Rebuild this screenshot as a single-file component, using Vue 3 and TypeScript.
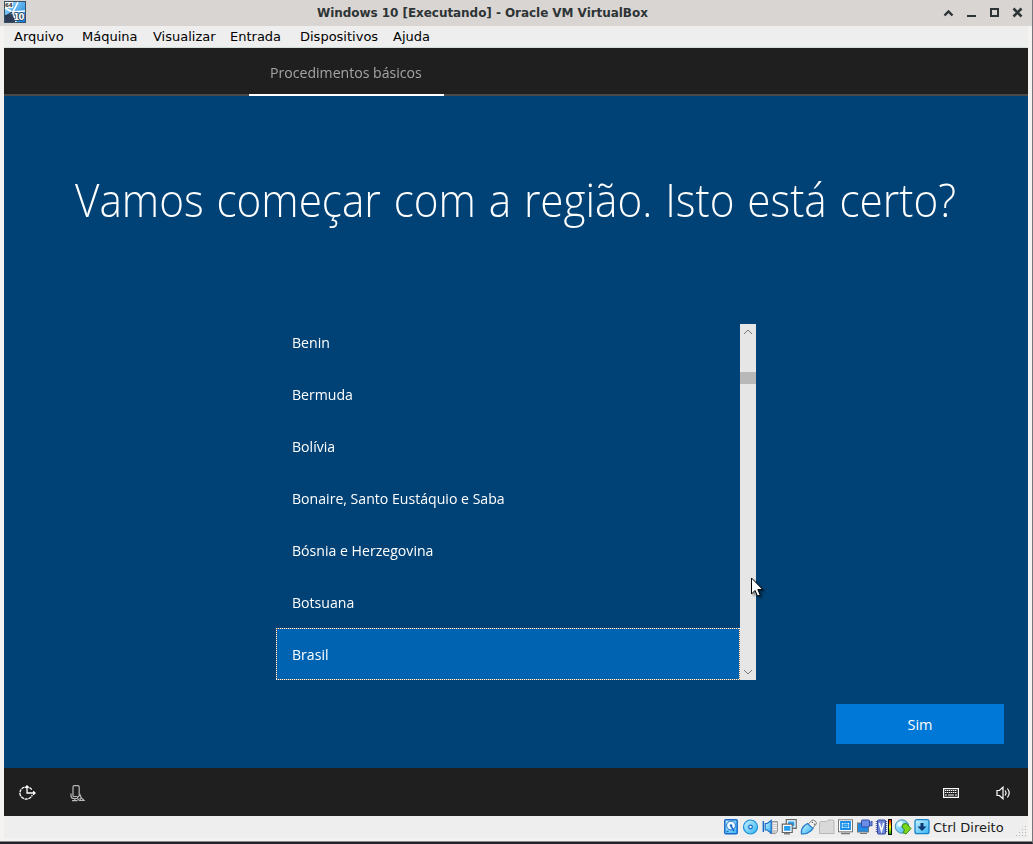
<script setup lang="ts">
const menus: string[] = ['Arquivo', 'Máquina', 'Visualizar', 'Entrada', 'Dispositivos', 'Ajuda']

interface Region {
  name: string
  selected?: boolean
}

const regions: Region[] = [
  { name: 'Benin' },
  { name: 'Bermuda' },
  { name: 'Bolívia' },
  { name: 'Bonaire, Santo Eustáquio e Saba' },
  { name: 'Bósnia e Herzegovina' },
  { name: 'Botsuana' },
  { name: 'Brasil', selected: true },
]
</script>

<template>
  <div class="window">
    <header class="titlebar">
      <svg class="app-icon" width="22" height="22" viewBox="0 0 22 22">
        <defs>
          <linearGradient id="pane" x1="0" y1="0" x2="1" y2="1">
            <stop offset="0" stop-color="#9bdcff" />
            <stop offset="1" stop-color="#1681dc" />
          </linearGradient>
        </defs>
        <rect width="22" height="22" fill="#35516a" />
        <rect x="1" y="1" width="20" height="20" fill="url(#pane)" />
        <path d="M1 14l7-1 4 8H1z" fill="#303b55" />
        <path d="M1 7l7 4 13-1M14 1l-5 10 3 10" stroke="#fff" stroke-width="1.6" fill="none" />
        <path d="M1 16l7-5" stroke="#263950" stroke-width="1.4" />
        <rect x="1" y="1" width="8" height="6" fill="#f7f7f7" />
        <text x="1" y="6" font-size="5.5" font-weight="700" fill="#333">64</text>
        <text x="9.4" y="19" font-size="8.5" font-weight="700" fill="#fff" stroke="#203852" stroke-width="1.3" paint-order="stroke" textLength="11">10</text>
      </svg>
      <span class="title">Windows 10 [Executando] - Oracle VM VirtualBox</span>
      <svg class="controls" width="82" height="14" viewBox="0 0 82 14" fill="none" stroke="#2d3436">
        <path d="M1.5 9.5L5.5 5.5l4 4" stroke-width="2.4" />
        <path d="M24 10h9" stroke-width="2" />
        <rect x="48" y="3" width="7" height="7" stroke-width="2" />
        <path d="M70.5 2.5l8 8m0-8l-8 8" stroke-width="2.5" />
      </svg>
    </header>

    <main class="frame">
      <nav class="menubar">
        <span v-for="menu in menus" :key="menu">{{ menu }}</span>
      </nav>

      <section class="guest">
        <div class="tabs">
          <div class="tab"><span class="label">Procedimentos básicos</span></div>
        </div>

        <div class="setup">
          <h1>Vamos começar com a região. Isto está certo?</h1>
          <div class="picker">
            <ul class="regions">
              <li v-for="region in regions" :key="region.name" :class="{ selected: region.selected }">
                <svg v-if="region.selected" class="focus" width="464" height="52" fill="none">
                  <path d="M0 .5H464M463.5 0V52M0 51.5H464M.5 0V52" stroke="#7d6b58" />
                  <path d="M0 .5H464M463.5 0V52M0 51.5H464M.5 0V52" stroke="#fff" stroke-dasharray="1 1" shape-rendering="crispEdges" />
                </svg>
                <span class="label">{{ region.name }}</span>
              </li>
            </ul>
            <div class="scrollbar">
              <svg width="16" height="16" viewBox="0 0 16 16"><path d="M4 10l4-4 4 4" fill="none" stroke="#777" /></svg>
              <div class="thumb"></div>
              <svg class="down" width="16" height="16" viewBox="0 0 16 16"><path d="M4 6l4 4 4-4" fill="none" stroke="#777" /></svg>
            </div>
          </div>
          <div class="actions"><button>Sim</button></div>
        </div>

        <footer class="toolbar">
          <svg class="ease" width="18" height="16" viewBox="0 0 18 16" fill="none" stroke="#fff" stroke-width="1.3">
            <path d="M5.5 2.2A6 6 0 0 0 7.5 14A6 6 0 0 0 13.2 10" stroke-dasharray="3.2 .7" />
            <path d="M8 1v7h8M6.2 2.8L8 1l1.8 1.8M14.2 6.2L16 8l-1.8 1.8M10.5 2.6A6 6 0 0 1 12.8 4.6" />
          </svg>
          <svg class="mic" width="15" height="17" viewBox="0 0 15 17" fill="none" stroke="#b9b9b9" stroke-width="1.2">
            <path d="M3 11.5V2q0-1.4 1.4-1.4h3.4q1.4 0 1.4 1.4v8M3 11.5h4.2M1 8.5v2.5q0 2.5 3 2.5h3M4.8 13.5v2.2M2 15.7h5.5" />
            <path d="M10 9.8l1.2 3 3 2.7H9.6q-2.2-.8-2-3.2zM10.2 13v2.3" />
          </svg>
          <svg class="keyboard" width="16" height="10" viewBox="0 0 16 10" fill="none" stroke="#fff">
            <rect x=".6" y=".6" width="14.8" height="8.8" stroke-width="1.2" />
            <path d="M2 2.5h12M2 4.5h12" stroke-dasharray="1.4 .6" />
            <path d="M2 7h2m1 0h6m1 0h2" />
          </svg>
          <svg class="volume" width="15" height="14" viewBox="0 0 15 14" fill="none" stroke="#fff" stroke-width="1.2">
            <path d="M1 4.5h2.4L7 1.2v11.6L3.4 9.5H1z" />
            <path d="M9 4.5q2 2.5 0 5M11.4 2.5q3.6 4.5 0 9" />
          </svg>
        </footer>
      </section>

      <div class="statusbar">
        <svg class="devices" width="207" height="16" viewBox="0 0 207 16">
          <defs>
            <linearGradient id="sky" x1="0" y1="0" x2="1" y2="1">
              <stop offset="0" stop-color="#c7f2ff" />
              <stop offset="1" stop-color="#36b3f4" />
            </linearGradient>
            <linearGradient id="load" x1="0" y1="0" x2="0" y2="1">
              <stop offset="0" stop-color="#f00" />
              <stop offset=".5" stop-color="#ff0" />
              <stop offset="1" stop-color="#090" />
            </linearGradient>
          </defs>
          <!-- hard disk -->
          <g>
            <rect x=".8" y=".8" width="12.4" height="14" rx="1" fill="url(#sky)" stroke="#1769ca" stroke-width="1.5" />
            <circle cx="7" cy="6.5" r="4.4" fill="#f2fcff" stroke="#2372cd" />
            <circle cx="7" cy="6.5" r="1.3" fill="#1c6cce" />
            <path d="M7 7l3 5M2.5 12.5h2" stroke="#1c6cce" stroke-width="1.5" />
          </g>
          <!-- optical disc -->
          <circle cx="26.5" cy="8" r="7" fill="url(#sky)" stroke="#188fdc" stroke-width="1.2" />
          <circle cx="26.5" cy="8" r="1.8" fill="#fff" stroke="#166fc8" stroke-width="1.3" />
          <!-- audio -->
          <g>
            <path d="M48 2.5h5.5v10l-2 2H46z" fill="#c8c8c8" stroke="#999" />
            <path d="M49 4.5h4m-4 2h4m-4 2h4m-4 2h4" stroke="#f4f4f4" />
            <path d="M39.3 2v11" stroke="#176cc9" stroke-width="1.4" />
            <path d="M41.2 4.5h2l4-3v12.5l-4-3h-2z" fill="url(#sky)" stroke="#176cc9" stroke-width="1.2" />
          </g>
          <!-- network -->
          <g fill="#279ff0" stroke="#fff" stroke-width="1.2">
            <path d="M62.5 .8h9.5v8.5h-9.5z" stroke="#666" stroke-width="1.6" />
            <path d="M63.5 1.8h7.5v6h-7.5z" />
            <path d="M58.5 5.3h9.5v8h-9.5z" stroke="#666" stroke-width="1.6" />
            <path d="M59.5 6.3h7.5v6h-7.5z" />
            <path d="M60 14.8h6" stroke="#666" />
          </g>
          <!-- usb -->
          <path d="M84 5.5L88 1.2q1-.8 3 .8t1.2 3L88.5 9.5z" fill="#f6f6f6" stroke="#777" />
          <path d="M77.5 14.8q-.8-5 3-8.3l3-2 5.5 5-2.3 2.5q-4 3.5-9.2 2.8z" fill="url(#sky)" stroke="#247bc9" stroke-width="1.2" />
          <path d="M88 3l.8.8M90 4.8l.8.8" stroke="#555" stroke-width="1.3" />
          <!-- shared folder -->
          <path d="M95.5 14.5v-11l1-1h6l1.5-1.5h5l1 1v12.5z" fill="#d9d9d9" stroke="#b7b7b7" />
          <!-- display -->
          <rect x="114.5" y=".8" width="14" height="12" fill="#fff" stroke="#777" />
          <path d="M117 3h9v7h-9z" fill="#fff" stroke="#198eea" stroke-width="1.8" />
          <path d="M119 5h5v3h-5z" fill="#48b6f8" stroke="#198eea" />
          <path d="M117 14.5h9" stroke="#777" stroke-width="1.5" />
          <!-- recording -->
          <rect x="133.5" y="4" width="11" height="9" fill="#218be5" stroke="#777" />
          <path d="M136 14.5h7" stroke="#777" />
          <rect x="137.5" y="1" width="8" height="7" rx="1" fill="#6b8de3" stroke="#2b49a8" />
          <path d="M145.5 4l2.5-2v5l-2.5-1z" fill="#718fe0" stroke="#3552aa" />
          <!-- cpu -->
          <rect x="153.5" y="1" width="8" height="14" rx="1" fill="#6e85d7" stroke="#3248a0" />
          <path d="M152.3 2v12M162.7 2v12" stroke="#3248a0" stroke-dasharray="1 1" />
          <path d="M155.3 4l2.2 8 2.2-8" fill="none" stroke="#fff" stroke-width="1.5" />
          <rect x="164.5" y=".5" width="3" height="15" fill="url(#load)" stroke="#111" />
          <!-- mouse integration -->
          <circle cx="178" cy="7.5" r="6.7" fill="url(#sky)" stroke="#448eb7" />
          <path d="M173.5 4l4-2 2 3-4 3-2-1z" fill="#e3faff" />
          <path d="M179 5l3.5-.5 4.5 5-5 5.5-3-1.5 1.5-2.5-2.5-3z" fill="#7bd61c" stroke="#328b16" />
          <!-- host key -->
          <rect x="191" y=".7" width="14" height="14" rx="2" fill="url(#sky)" stroke="#1881c7" stroke-width="1.3" />
          <path d="M196.5 4h3v3.5h3L198 12l-4.5-4.5h3z" fill="#0c3971" />
        </svg>
        <span>Ctrl Direito</span>
        <svg class="grip" width="12" height="12" viewBox="0 0 12 12">
          <path d="M10.5 1v11M7.5 4v8M4.5 7v5M1.5 10v2" stroke="#b5b5b5" stroke-dasharray="1 2" />
        </svg>
      </div>
    </main>

    <svg class="cursor" width="14" height="22" viewBox="0 0 14 22">
      <path d="M1.5 1v16l3.5-3.5 2.5 5.6 2.7-1.2-2.4-5.3h5z" fill="#fff" stroke="#000" />
    </svg>
  </div>
</template>

<style>
body {
  margin: 0;
}
</style>

<style scoped>
.window {
  box-sizing: border-box;
  position: relative;
  width: 1033px;
  height: 844px;
  overflow: hidden;
  background: #f5f3f2;
  border-right: 1px solid #77767a;
  border-bottom: 2px solid #20232d;
  box-shadow: inset 0 -1px #8b8a89;
  font-family: "DejaVu Sans", sans-serif;
}

.titlebar {
  display: grid;
  grid-template-columns: 317px 1fr 89px;
  height: 26px;
  background: #d9d5d2;
}

.app-icon {
  margin: 1px 0 0 4px;
}

.title {
  color: #2d3436;
  font-size: 12px;
  font-weight: 700;
  letter-spacing: -0.05px;
  line-height: 27px;
  white-space: nowrap;
}

.controls {
  margin-top: 6px;
}

.frame {
  width: 1024px;
  margin-left: 4px;
}

.menubar {
  box-sizing: border-box;
  display: grid;
  grid-template-columns: 68px 71px 77px 70px 93px 60px;
  height: 22px;
  padding-left: 10px;
  background: #eee;
  border-bottom: 1px solid #d4ddd7;
  color: #000;
  font-size: 13px;
  line-height: 21px;
}

.guest {
  font-family: "Open Sans", "Noto Sans", sans-serif;
  color: #fff;
}

.label {
  display: inline-block;
  transform: scaleX(0.94);
  transform-origin: left;
  white-space: nowrap;
}

.tabs {
  box-sizing: border-box;
  height: 48px;
  padding-left: 245px;
  background: #1f1f1f;
  box-shadow: inset 0 -2px #4c4a48;
}

.tab {
  box-sizing: border-box;
  width: 195px;
  height: 48px;
  padding-left: 21px;
  border-bottom: 2px solid #fff;
  color: #a5a5a5;
  font-size: 15px;
  line-height: 49px;
}

.setup {
  display: flex;
  flex-direction: column;
  height: 672px;
  background: #004275;
}

h1 {
  height: 64px;
  margin: 71px 0 0 71px;
  font-size: 46px;
  font-weight: 300;
  line-height: 64px;
  word-spacing: 2px;
  white-space: nowrap;
  transform: scaleX(0.919);
  transform-origin: left;
}

.picker {
  display: flex;
  width: 480px;
  height: 356px;
  margin: 93px 0 0 272px;
}

.regions {
  display: flex;
  flex-direction: column;
  justify-content: flex-end;
  width: 464px;
  margin: 0;
  padding: 0;
  list-style: none;
}

.regions li {
  box-sizing: border-box;
  position: relative;
  flex: 0 0 52px;
  padding: 1px 0 0 16px;
  font-size: 15px;
  line-height: 50px;
}

.regions .selected {
  background: #0063b1;
}

.focus {
  position: absolute;
  inset: 0;
}

.scrollbar {
  display: flex;
  flex-direction: column;
  width: 16px;
  background: #e6e6e6;
}

.thumb {
  height: 12px;
  margin-top: 32px;
  background: #b8b8b8;
}

.down {
  margin-top: auto;
}

.actions {
  display: flex;
  justify-content: flex-end;
  padding: 24px 24px 0 0;
}

button {
  width: 168px;
  height: 40px;
  padding: 1px 0 0;
  border: 0;
  background: #0078d7;
  color: #fff;
  font: 14.5px/39px "Open Sans", sans-serif;
}

.toolbar {
  display: flex;
  align-items: center;
  box-sizing: border-box;
  height: 48px;
  padding: 2px 18px 0 15px;
  background: #1f1f1f;
}

.mic {
  margin-left: 33px;
}

.keyboard {
  margin-left: auto;
}

.volume {
  margin: 0 -1px 0 37px;
}

.statusbar {
  display: flex;
  align-items: flex-start;
  height: 22px;
  padding-left: 720px;
  background: #eee;
  color: #1b1b1b;
  font-size: 13px;
  line-height: 23px;
}

.devices {
  flex: none;
  margin: 3px 2px 0 0;
}

.statusbar span {
  width: 82px;
  white-space: nowrap;
}

.grip {
  margin-top: 9px;
}

.cursor {
  position: absolute;
  left: 750px;
  top: 577px;
  filter: drop-shadow(2px 2px 1px rgb(0 0 0 / 45%));
}
</style>
